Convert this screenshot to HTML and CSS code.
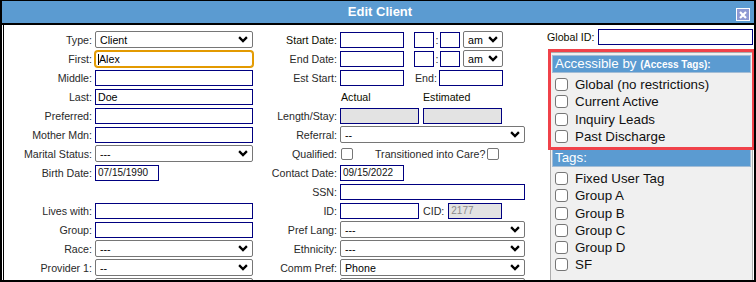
FILE: index.html
```html
<!DOCTYPE html>
<html>
<head>
<meta charset="utf-8">
<title>Edit Client</title>
<link rel="stylesheet" href="styles.css">
</head>
<body>
<div class="dialog">
  <div class="titlebar">
    <span class="title">Edit Client</span>
    <span class="close"><svg width="8" height="8" viewBox="0 0 8 8"><path d="M1 1L7 7M7 1L1 7" stroke="#fff" stroke-width="2.2" fill="none"/></svg></span>
  </div>
  <div class="content">
    <div class="form">
      <!-- row 1 -->
      <div class="lbl">Type:</div>
      <div class="fld"><select class="sel w158"><option>Client</option></select></div>
      <div class="lbl strong">Start Date:</div>
      <div class="fld"><input class="txt w64" type="text"><input class="txt w20 ml10" type="text"><span class="colon">:</span><input class="txt w20" type="text"><select class="sel w40 ml3"><option>am</option></select></div>
      <!-- row 2 -->
      <div class="lbl">First:</div>
      <div class="fld"><input class="txt w158 focus" type="text" value="Alex"></div>
      <div class="lbl">End Date:</div>
      <div class="fld"><input class="txt w64" type="text"><input class="txt w20 ml10" type="text"><span class="colon">:</span><input class="txt w20" type="text"><select class="sel w40 ml3"><option>am</option></select></div>
      <!-- row 3 -->
      <div class="lbl">Middle:</div>
      <div class="fld"><input class="txt w158" type="text"></div>
      <div class="lbl">Est Start:</div>
      <div class="fld"><input class="txt w64" type="text"><span class="inl ml11">End:</span><input class="txt w64 ml2" type="text"></div>
      <!-- row 4 -->
      <div class="lbl">Last:</div>
      <div class="fld"><input class="txt w158" type="text" value="Doe"></div>
      <div class="lbl"></div>
      <div class="fld"><span class="inl strong colhead">Actual</span><span class="inl strong">Estimated</span></div>
      <!-- row 5 -->
      <div class="lbl">Preferred:</div>
      <div class="fld"><input class="txt w158" type="text"></div>
      <div class="lbl">Length/Stay:</div>
      <div class="fld"><input class="txt w79 ro" type="text" readonly><input class="txt w79 ro ml4" type="text" readonly></div>
      <!-- row 6 -->
      <div class="lbl">Mother Mdn:</div>
      <div class="fld"><input class="txt w158" type="text"></div>
      <div class="lbl">Referral:</div>
      <div class="fld"><select class="sel w185"><option>--</option></select></div>
      <!-- row 7 -->
      <div class="lbl">Marital Status:</div>
      <div class="fld"><select class="sel w158"><option>---</option></select></div>
      <div class="lbl">Qualified:</div>
      <div class="fld"><input class="cb ml1" type="checkbox"><span class="inl ml22">Transitioned into Care?</span><input class="cb ml2" type="checkbox"></div>
      <!-- row 8 -->
      <div class="lbl">Birth Date:</div>
      <div class="fld"><input class="txt w64 date" type="text" value="07/15/1990"></div>
      <div class="lbl">Contact Date:</div>
      <div class="fld"><input class="txt w64 date" type="text" value="09/15/2022"></div>
      <!-- row 9 -->
      <div class="lbl"></div>
      <div class="fld"></div>
      <div class="lbl">SSN:</div>
      <div class="fld"><input class="txt w185" type="text"></div>
      <!-- row 10 -->
      <div class="lbl">Lives with:</div>
      <div class="fld"><input class="txt w158" type="text"></div>
      <div class="lbl">ID:</div>
      <div class="fld"><input class="txt w79" type="text"><span class="inl ml4">CID:</span><input class="txt w54 ro ml4 date grey" type="text" value="2177" readonly></div>
      <!-- row 11 -->
      <div class="lbl">Group:</div>
      <div class="fld"><input class="txt w158" type="text"></div>
      <div class="lbl">Pref Lang:</div>
      <div class="fld"><select class="sel w185"><option>---</option></select></div>
      <!-- row 12 -->
      <div class="lbl">Race:</div>
      <div class="fld"><select class="sel w158"><option>---</option></select></div>
      <div class="lbl">Ethnicity:</div>
      <div class="fld"><select class="sel w185"><option>---</option></select></div>
      <!-- row 13 -->
      <div class="lbl">Provider 1:</div>
      <div class="fld"><select class="sel w158"><option>--</option></select></div>
      <div class="lbl">Comm Pref:</div>
      <div class="fld"><select class="sel w185"><option>Phone</option></select></div>
      <!-- row 14 (cut off by the dialog edge) -->
      <div class="lbl"></div>
      <div class="fld"><select class="sel w158"><option></option></select></div>
      <div class="lbl"></div>
      <div class="fld"><select class="sel w185"><option></option></select></div>
    </div>
    <div class="side">
      <div class="gid"><span class="strong">Global ID:</span><input class="txt gidin" type="text"></div>
      <div class="panel">
        <div class="group access">
          <div class="phead">Accessible by <b class="sm">(Access Tags):</b></div>
          <div class="items">
            <label class="item"><input type="checkbox" class="pcb"><span>Global (no restrictions)</span></label>
            <label class="item"><input type="checkbox" class="pcb"><span>Current Active</span></label>
            <label class="item"><input type="checkbox" class="pcb"><span>Inquiry Leads</span></label>
            <label class="item"><input type="checkbox" class="pcb"><span>Past Discharge</span></label>
          </div>
        </div>
        <div class="group tags">
          <div class="phead">Tags:</div>
          <div class="items">
            <label class="item"><input type="checkbox" class="pcb"><span>Fixed User Tag</span></label>
            <label class="item"><input type="checkbox" class="pcb"><span>Group A</span></label>
            <label class="item"><input type="checkbox" class="pcb"><span>Group B</span></label>
            <label class="item"><input type="checkbox" class="pcb"><span>Group C</span></label>
            <label class="item"><input type="checkbox" class="pcb"><span>Group D</span></label>
            <label class="item"><input type="checkbox" class="pcb"><span>SF</span></label>
          </div>
        </div>
      </div>
    </div>
  </div>
</div>
</body>
</html>
```
FILE: styles.css
```css
* { box-sizing: border-box; }
body {
  margin: 0;
  background: #fff;
  font-family: "Liberation Sans", Arial, sans-serif;
  color: #222;
}
.dialog {
  width: 756px;
  height: 282px;
  border: 2px solid #000;
  border-top-width: 1px;
  overflow: hidden;
  display: flex;
  flex-direction: column;
  background: #fff;
}
.titlebar {
  flex: none;
  height: 24px;
  background: #5b9bd1;
  border-bottom: 2px solid #000;
  display: flex;
  align-items: center;
  justify-content: center;
  position: relative;
}
.title {
  color: #fff;
  font-size: 13px;
  font-weight: bold;
  line-height: 16px;
  margin-left: 4px;
}
.close {
  position: absolute;
  right: 4px;
  top: 7px;
  width: 14px;
  height: 13px;
  border: 1px solid #fff;
  background: #8f9ad3;
  display: flex;
  align-items: center;
  justify-content: center;
}
.close svg { display: block; }
.content {
  flex: 1;
  min-height: 0;
  display: flex;
  margin-left: 1px;
  border-left: 1px solid #000;
}
.form {
  flex: none;
  width: 542px;
  padding-top: 5px;
  display: grid;
  grid-template-columns: 91px 158px 87px 185px;
  grid-auto-rows: 19px;
  align-items: center;
  font-size: 10.67px;
}
.lbl {
  text-align: right;
  padding-right: 3px;
  white-space: nowrap;
  color: #2a2a2a;
}
.strong { color: #0d0d00; }
.fld {
  display: flex;
  align-items: center;
  white-space: nowrap;
  height: 19px;
}
.inl { color: #2a2a2a; }
.inl.strong { color: #0d0d00; }
.colhead { width: 83px; padding-left: 1px; }
.colon { width: 6px; text-align: center; color: #2a2a2a; }
.txt {
  height: 16px;
  border: 1px solid #000080;
  border-radius: 0;
  padding: 0 2px;
  margin: 0;
  font: 10.67px "Liberation Sans", Arial, sans-serif;
  color: #000;
  background: #fff;
  outline: none;
}
.txt.date { font-size: 10px; color: #111; }
.txt.ro { background: #e3e3e3; }
.txt.grey { color: #8a8a8a; }
.txt.focus {
  border: 1px solid #e39a00;
  border-radius: 3px;
  box-shadow: 0 0 0 1px #e39a00;
  text-indent: 1px;
  background: #fff linear-gradient(#000, #000) no-repeat 2px 2px / 1px 11px;
}
.sel {
  -webkit-appearance: none;
  appearance: none;
  height: 17px;
  margin: 0;
  border: 1px solid #767676;
  border-radius: 2px;
  padding: 0 16px 0 4px;
  font: 10.67px "Liberation Sans", Arial, sans-serif;
  color: #000;
  background: #fff url("data:image/svg+xml,%3Csvg xmlns='http://www.w3.org/2000/svg' viewBox='0 0 10 7'%3E%3Cpath d='M1.1 1.1L5 5 8.9 1.1' fill='none' stroke='%23000' stroke-width='2.3'/%3E%3C/svg%3E") no-repeat right 4px center / 10px 7px;
  outline: none;
}
.cb {
  -webkit-appearance: none;
  appearance: none;
  width: 12px;
  height: 12px;
  margin: 0;
  border: 1px solid #767676;
  border-radius: 2px;
  background: #fff;
}
.w20 { width: 20px; }
.w40 { width: 40px; }
.w54 { width: 54px; }
.w64 { width: 64px; }
.w79 { width: 79px; }
.w158 { width: 158px; }
.w185 { width: 185px; }
.ml1 { margin-left: 1px; }
.ml2 { margin-left: 2px; }
.ml3 { margin-left: 3px; }
.ml4 { margin-left: 4px; }
.ml10 { margin-left: 10px; }
.ml11 { margin-left: 11px; }
.ml22 { margin-left: 22px; }

.side {
  flex: none;
  width: 208px;
  font-size: 10.67px;
}
.gid {
  display: flex;
  align-items: center;
  justify-content: space-between;
  margin-top: 4px;
  padding-left: 1px;
  padding-right: 1px;
  height: 16px;
}
.gidin { width: 155px; }
.panel {
  margin-top: 7px;
  margin-left: 4px;
  width: 203px;
  height: 260px;
  border: 1px solid #adadad;
  background: #f0f0f0;
  padding: 0 1px;
}
.group.access {
  padding-top: 2px;
  padding-bottom: 1px;
  outline: 3px solid #f0424a;
  outline-offset: 1px;
  position: relative;
  z-index: 1;
}
.group.tags { margin-top: 3px; }
.phead {
  height: 18px;
  background: #5b9bd1;
  border: 1px solid #a3bdd6;
  color: #fff;
  font-size: 13.33px;
  line-height: 16px;
  padding-left: 2px;
  white-space: nowrap;
}
.phead .sm { font-size: 10px; }
.items { margin-top: 3px; }
.item {
  display: flex;
  align-items: center;
  height: 17.25px;
  font-size: 13.33px;
  color: #111;
  white-space: nowrap;
}
.pcb {
  -webkit-appearance: none;
  appearance: none;
  width: 13px;
  height: 13px;
  margin: 0 7px 0 3px;
  border: 1px solid #767676;
  border-radius: 3px;
  background: #fff;
}
```
